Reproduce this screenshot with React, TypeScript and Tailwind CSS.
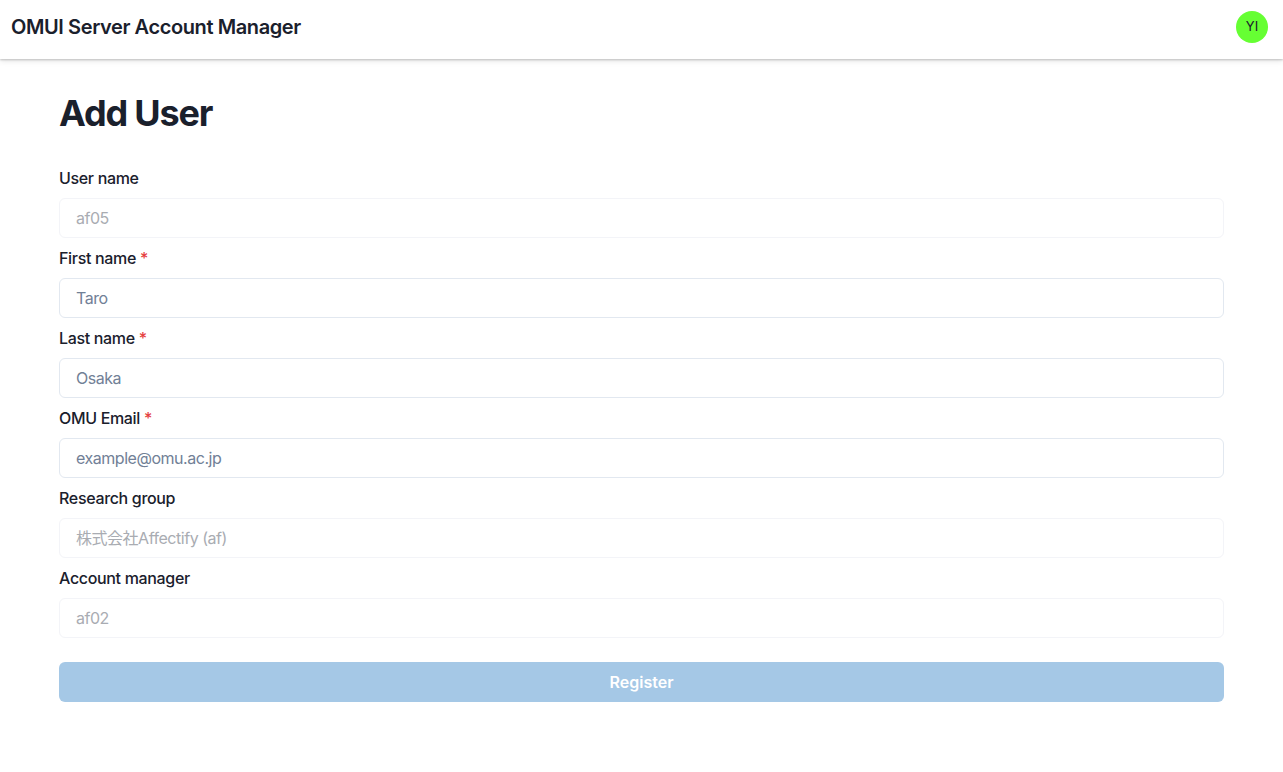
const fields = [
  { label: "User name", value: "af05", disabled: true },
  { label: "First name", value: "Taro", required: true },
  { label: "Last name", value: "Osaka", required: true },
  { label: "OMU Email", value: "example@omu.ac.jp", required: true },
  { label: "Research group", value: "株式会社Affectify (af)", disabled: true },
  { label: "Account manager", value: "af02", disabled: true },
];

function Field({
  label,
  value,
  required,
  disabled,
}: {
  label: string;
  value: string;
  required?: boolean;
  disabled?: boolean;
}) {
  return (
    <div>
      <div className="flex h-10 items-center text-base font-medium tracking-[-0.33px] text-[#1a202c]">
        {label}
        {required && <span className="ml-1 text-[#e53e3e]">*</span>}
      </div>
      <div
        className={`flex h-10 items-center rounded-md border px-4 text-base tracking-[-0.47px] ${
          disabled
            ? "border-[#f3f4f8] text-[#a9acb2]"
            : "border-[#e2e8f0] text-[#718096]"
        }`}
      >
        {value}
      </div>
    </div>
  );
}

export default function App() {
  return (
    <div className="min-h-[772px] bg-white font-['Inter','Noto_Sans_CJK_JP',sans-serif] text-[#1a202c]">
      <header className="flex h-[59px] items-center justify-between pr-[15px] pb-[5px] pl-[11px] shadow-[0_1px_2px_rgba(0,0,0,0.2),0_2px_6px_rgba(0,0,0,0.1)]">
        <h1 className="text-xl font-semibold tracking-[-0.4px]">OMUI Server Account Manager</h1>
        <div className="flex h-8 w-8 items-center justify-center rounded-full bg-[#66ff33] text-[13px]">
          YI
        </div>
      </header>
      <main className="px-[59px] pt-[33px]">
        <h2 className="mb-[23px] text-4xl leading-[43px] font-bold tracking-[-1.15px]">Add User</h2>
        {fields.map((f) => (
          <Field key={f.label} {...f} />
        ))}
        <button
          type="button"
          className="mt-6 h-10 w-full rounded-md bg-[#a5c8e6] font-semibold text-white"
        >
          Register
        </button>
      </main>
    </div>
  );
}
